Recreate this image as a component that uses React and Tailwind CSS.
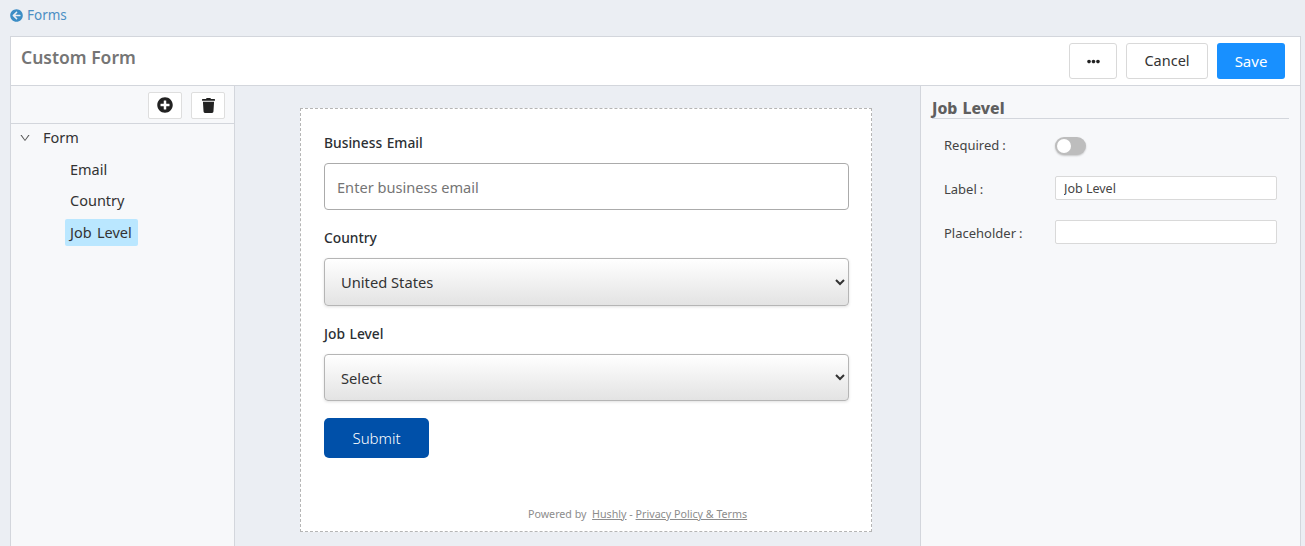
import { FaArrowCircleLeft, FaEllipsisH, FaPlusCircle, FaTrash } from 'react-icons/fa'
import { AiOutlineDown } from 'react-icons/ai'

const font = "font-['Noto_Sans',sans-serif]"

function Field({ label, children, className }) {
  return (
    <div className={className}>
      <label className="block text-[13.8px] leading-[20px] font-medium text-[#2b2f33] mb-[10px] [word-spacing:1px]">{label}</label>
      {children}
    </div>
  )
}

function FormSelect({ value, options, height = 'h-[47px]' }) {
  return (
    <select
      defaultValue={value}
      className={`block w-full ${height} pl-3 pr-3 text-[14.7px] text-[#333] rounded-[4px] border border-[#b5b5b5] bg-[linear-gradient(#ffffff,#e3e3e3)] shadow-[0_1px_3px_rgba(0,0,0,0.12)] outline-none`}
    >
      {options.map((option) => (
        <option key={option}>{option}</option>
      ))}
    </select>
  )
}

function PropRow({ label, children, className, labelClass = '' }) {
  return (
    <div className={`flex items-center ${className}`}>
      <span className={`w-[111px] text-[13px] text-[#444] ${labelClass}`}>
        {label}
        <span className="ml-[3px]">:</span>
      </span>
      {children}
    </div>
  )
}

export default function App() {
  return (
    <div className={`h-[546px] overflow-hidden flex flex-col bg-[#ebeef3] ${font}`}>
      {/* Breadcrumb */}
      <div className="h-[36px] pl-[10px] pb-[6px] flex items-center gap-1 text-[13.5px] text-[#4b8fc4]">
        <FaArrowCircleLeft className="w-[13px] h-[13px] text-[#3c8dc5]" />
        Forms
      </div>

      <div className="flex-1 min-h-0 flex flex-col ml-[10px] mr-[4px] border border-b-0 border-[#d3d6dc]">
        {/* Header */}
        <div className="h-[49px] shrink-0 flex items-center justify-between bg-white border-b border-[#d3d6dc] pl-[10px] pr-[15px]">
          <h1 className="text-[17.5px] font-semibold text-[#757575] -mt-[7px]">Custom Form</h1>
          <div className="flex items-center gap-[9px]">
            <button className="w-[48px] h-[36px] flex items-center justify-center bg-white border border-[#d9d9d9] rounded-[3px] text-[#222]">
              <FaEllipsisH className="w-[13px] h-[13px]" />
            </button>
            <button className="w-[82px] h-[36px] bg-white border border-[#d9d9d9] rounded-[3px] text-[14.5px] text-[#333]">
              Cancel
            </button>
            <button className="w-[68px] h-[36px] bg-[#1890ff] rounded-[3px] text-[15px] text-white">Save</button>
          </div>
        </div>

        <div className="flex-1 min-h-0 flex">
          {/* Tree panel */}
          <aside className="w-[224px] shrink-0 bg-[#f7f8fa] border-r border-[#d3d6dc]">
            <div className="h-[38px] pt-[1px] flex items-center justify-end gap-[9px] pr-[9px] border-b border-[#d3d6dc]">
              <button className="w-[34px] h-[27px] flex items-center justify-center bg-white border border-[#dedede] rounded-[2px] text-[#222]">
                <FaPlusCircle className="w-[16px] h-[16px]" />
              </button>
              <button className="w-[34px] h-[27px] flex items-center justify-center bg-white border border-[#dedede] rounded-[2px] text-[#222]">
                <FaTrash className="w-[13px] h-[15px]" />
              </button>
            </div>
            <div className="text-[14.5px] text-[#333] [word-spacing:1.5px]">
              <div className="h-[27px] flex items-center pl-[8px]">
                <AiOutlineDown className="w-[12px] h-[12px] text-[#555]" />
                <span className="ml-[12px]">Form</span>
              </div>
              <div className="mt-[5px] flex flex-col items-start pl-[54px] gap-[4px]">
                <span className="h-[27px] px-[5px] flex items-center">Email</span>
                <span className="h-[27px] px-[5px] flex items-center">Country</span>
                <span className="h-[27px] mt-[1px] pl-[5px] pr-[6px] flex items-center bg-[#bae7ff] rounded-[2px]">Job Level</span>
              </div>
            </div>
          </aside>

          {/* Form canvas */}
          <main className="flex-1 min-w-0 pt-[22px] pl-[65px]">
            <div className="w-[572px] h-[424px] flex flex-col bg-white border border-dashed border-[#b5b5b5] pl-[23px] pr-[22px] pt-[24px]">
              <Field label="Business Email">
                <input
                  placeholder="Enter business email"
                  className="block w-full h-[47px] px-3 text-[14.6px] rounded-[4px] border border-[#ababab] bg-white outline-none placeholder:text-[#757575]"
                />
              </Field>
              <Field label="Country" className="mt-[18px]">
                <FormSelect value="United States" options={['United States', 'Canada']} height="h-[48px]" />
              </Field>
              <Field label="Job Level" className="mt-[18px]">
                <FormSelect value="Select" options={['Select', 'Manager', 'Director']} />
              </Field>
              <button className="mt-[17px] w-[105px] h-[40px] bg-[#0050a9] rounded-[5px] text-[15px] font-light text-white">Submit</button>
              <p className="mt-auto mb-[9px] ml-[204px] text-[10.7px] text-[#8c8c8c] whitespace-nowrap">
                Powered by &nbsp;<a className="underline">Hushly</a> - <a className="underline">Privacy Policy &amp; Terms</a>
              </p>
            </div>
          </main>

          {/* Properties panel */}
          <aside className="w-[380px] shrink-0 bg-[#f7f8fa] border-l border-[#d3d6dc] pl-[11px] pr-[11px] pt-[13px]">
            <h2 className="text-[15.8px] leading-[19px] font-extrabold text-[#5f5f5f] border-b border-[#d3d6dc] [word-spacing:1px]">Job Level</h2>
            <div className="pl-[12px] pr-[1px]">
              <PropRow label="Required" className="mt-[18px] h-[18px]">
                <span className="relative w-[31px] h-[18px] rounded-full bg-[#bdbdbd] shadow-[0_1px_2px_rgba(0,0,0,0.2)]">
                  <span className="absolute left-[2px] top-[2px] w-[14px] h-[14px] rounded-full bg-white" />
                </span>
              </PropRow>
              <PropRow label="Label" labelClass="pt-[3px]" className="mt-[21px]">
                <input
                  defaultValue="Job Level"
                  className="w-[222px] h-[24px] px-2 pt-[1px] text-[12.5px] text-[#444] bg-white border border-[#d9d9d9] rounded-[2px] outline-none"
                />
              </PropRow>
              <PropRow label="Placeholder" labelClass="pt-[4px]" className="mt-[20px]">
                <input className="w-[222px] h-[24px] px-2 text-[12.5px] bg-white border border-[#d9d9d9] rounded-[2px] outline-none" />
              </PropRow>
            </div>
          </aside>
        </div>
      </div>
    </div>
  )
}
